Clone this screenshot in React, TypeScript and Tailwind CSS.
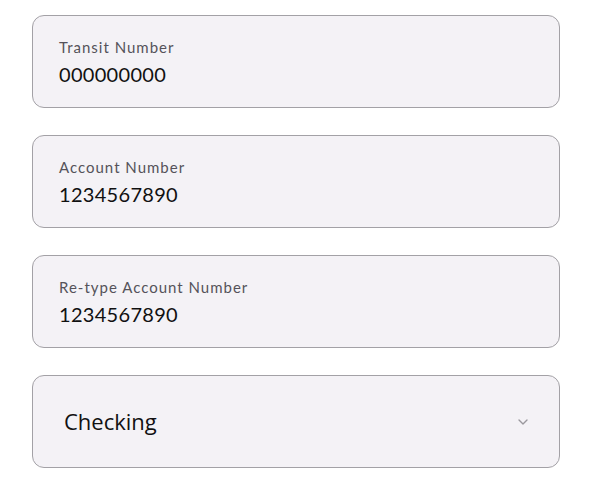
import { ChevronDown } from "lucide-react";

const fields = [
  { label: "Transit Number", value: "000000000" },
  { label: "Account Number", value: "1234567890" },
  { label: "Re-type Account Number", value: "1234567890" },
];

const Field = ({ label, value }: { label: string; value: string }) => (
  <div className="h-[93px] rounded-[12px] border-[1.5px] border-[#a3a1a6] bg-[#f4f2f6] pl-[26px] pt-[22px]">
    <div className="text-[15px] leading-[18px] tracking-[1px] text-[#55525a]">{label}</div>
    <div className="mt-[6px] text-[20px] leading-[24px] tracking-[0.3px] text-[#111]">{value}</div>
  </div>
);

export default function App() {
  return (
    <div className="flex w-[590px] flex-col gap-[27px] bg-white pl-[32px] pr-[30px] pt-[15px] font-['Lato',sans-serif]">
      {fields.map((f) => (
        <Field key={f.label} {...f} />
      ))}
      <div className="flex h-[93px] items-center justify-between rounded-[12px] border-[1.5px] border-[#a3a1a6] bg-[#f4f2f6] pl-[31px] pr-[28px]">
        <span className="font-['Open_Sans',sans-serif] text-[22px] text-[#111]">Checking</span>
        <ChevronDown size={16} strokeWidth={2} className="text-[#9a989d]" />
      </div>
    </div>
  );
}
